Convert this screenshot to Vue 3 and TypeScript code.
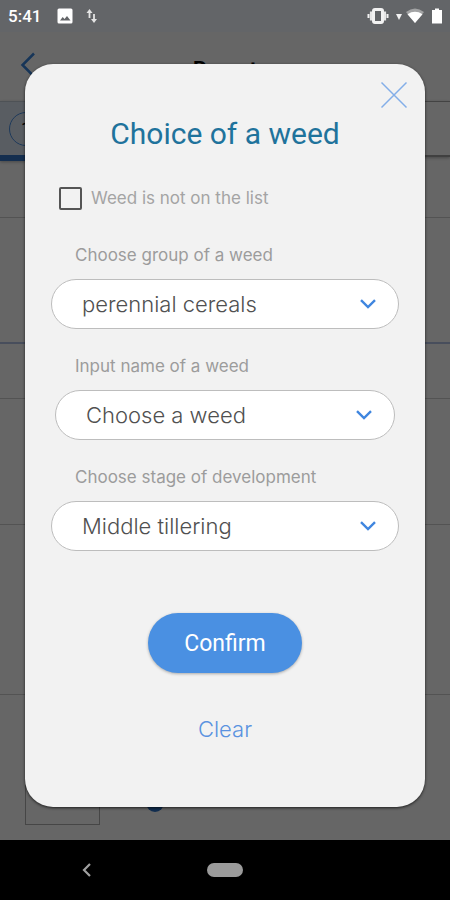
<script setup lang="ts">
import { reactive, ref } from 'vue'

interface Field {
  id: string
  label: string
  value: string
  options: string[]
  inset: boolean
}

const makeFields = (): Field[] => [
  {
    id: 'group',
    label: 'Choose group of a weed',
    value: 'perennial cereals',
    options: ['perennial cereals'],
    inset: false,
  },
  {
    id: 'name',
    label: 'Input name of a weed',
    value: 'Choose a weed',
    options: ['Choose a weed'],
    inset: true,
  },
  {
    id: 'stage',
    label: 'Choose stage of development',
    value: 'Middle tillering',
    options: ['Middle tillering'],
    inset: false,
  },
]

const fields = reactive<Field[]>(makeFields())
const notListed = ref(false)
const open = ref(true)

function clearForm(): void {
  notListed.value = false
  fields.splice(0, fields.length, ...makeFields())
}
</script>

<template>
  <div class="screen">
    <div class="stage">
      <main class="report" :inert="open">
        <header class="topbar">
          <button class="back" type="button" aria-label="Back">
            <svg width="16" height="26" viewBox="0 0 16 26">
              <path d="M14 1.5 2.5 13 14 24.5" fill="none" stroke="currentColor" stroke-width="2.5" />
            </svg>
          </button>
          <h1 class="page-title">Report</h1>
        </header>
        <div class="steps">
          <div class="tab active"><span class="step">1</span></div>
          <div class="tab"></div>
        </div>
        <div class="row row-a"></div>
        <div class="row row-b"></div>
        <div class="row row-c"></div>
        <div class="row row-d"></div>
        <div class="row row-e"></div>
        <div class="row-f">
          <span class="thumb"></span>
          <span class="dot"></span>
        </div>
      </main>

      <div v-if="open" class="overlay">
        <form class="modal" role="dialog" aria-labelledby="dialog-title" @submit.prevent="open = false">
          <button class="close" type="button" aria-label="Close" @click="open = false">
            <svg width="28" height="28" viewBox="0 0 28 28">
              <path d="M1.5 1.5 26.5 26.5M26.5 1.5 1.5 26.5" fill="none" stroke="currentColor" stroke-width="1.5" />
            </svg>
          </button>
          <h2 id="dialog-title" class="title">Choice of a weed</h2>

          <label class="check">
            <input v-model="notListed" type="checkbox" />
            <span>Weed is not on the list</span>
          </label>

          <div class="fields">
            <div v-for="field in fields" :key="field.id" class="field">
              <label :for="field.id">{{ field.label }}</label>
              <div class="select" :class="{ inset: field.inset }">
                <select :id="field.id" v-model="field.value">
                  <option v-for="option in field.options" :key="option">{{ option }}</option>
                </select>
                <svg class="chevron" width="16" height="10" viewBox="0 0 16 10">
                  <path d="M1 1.2 8 8 15 1.2" fill="none" stroke="currentColor" stroke-width="2.4" />
                </svg>
              </div>
            </div>
          </div>

          <button class="confirm" type="submit">Confirm</button>
          <button class="clear" type="button" @click="clearForm">Clear</button>
        </form>
      </div>

      <div class="status">
        <span class="time">5:41</span>
        <svg class="picture" width="16" height="16" viewBox="0 0 16 16">
          <path
            fill="#fff"
            fill-rule="evenodd"
            d="M2 .5h12A1.5 1.5 0 0 1 15.5 2v12a1.5 1.5 0 0 1-1.5 1.5H2A1.5 1.5 0 0 1 .5 14V2A1.5 1.5 0 0 1 2 .5ZM3 12.5h10.5L10 8l-2.500 3-1.800-2Z"
          />
        </svg>
        <svg class="arrows" width="12" height="16" viewBox="0 0 12 16">
          <path d="M3.5 10V3M8 6v7" stroke="#e4e4e4" stroke-width="1.8" />
          <path d="M.5 5 3.500 1l3 4ZM5 11l3 4 3-4Z" fill="#e4e4e4" />
        </svg>
        <svg class="vibrate" width="22" height="16" viewBox="0 0 22 16">
          <rect x="6.500" y="1.500" width="9" height="13" rx="1.500" fill="none" stroke="#f2f2f2" stroke-width="3" />
          <path d="M4 3.500v9M18 3.500v9" stroke="#e6e6e6" stroke-width="2.200" />
          <path d="M1.500 6v4M20.500 6v4" stroke="#f2f2f2" stroke-width="2" />
        </svg>
        <svg class="mini" width="6" height="6" viewBox="0 0 6 6">
          <path d="M0 0h6L3 6Z" fill="#f2f2f2" />
        </svg>
        <svg class="wifi" width="18" height="16" viewBox="0 0 18 16">
          <path d="M0 4Q9-3 18 4L9 15Z" fill="#a2a3a4" />
          <path d="M1.500 6.200Q9 1.500 16.500 6.200L9 15Z" fill="#fff" />
        </svg>
        <svg class="battery" width="12" height="16" viewBox="0 0 12 16">
          <path d="M4 .5h4V2h3v13.500H1V2h3Z" fill="#fff" />
        </svg>
      </div>
    </div>

    <nav class="navbar">
      <button class="nav-back" type="button" aria-label="Back">
        <svg width="10" height="14" viewBox="0 0 10 14">
          <path d="M8 1 2 7l6 6" fill="none" stroke="#a0a0a0" stroke-width="2.2" />
        </svg>
      </button>
      <button class="home" type="button" aria-label="Home"></button>
    </nav>
  </div>
</template>

<style>
body {
  margin: 0;
}
</style>

<style scoped>
.screen {
  display: grid;
  grid-template-rows: 1fr 60px;
  min-height: 100vh;
  font-family: Roboto, 'Liberation Sans', sans-serif;
  background: #000;
}

.screen * {
  box-sizing: border-box;
}

button {
  padding: 0;
  border: 0;
  background: none;
  font: inherit;
  cursor: pointer;
}

svg {
  display: block;
}

.stage {
  display: grid;
}

.report,
.overlay,
.status {
  grid-area: 1 / 1;
}

/* Page behind the dialog */
.report {
  display: flex;
  flex-direction: column;
  background: #fff;
}

.topbar {
  display: grid;
  grid-template-columns: 40px 1fr 40px;
  align-items: center;
  height: 101px;
  padding-top: 32px;
}

.back {
  justify-self: end;
  padding: 0 4px 4px 0;
  color: #3a86dc;
}

.page-title {
  margin: 0;
  padding-top: 4px;
  text-align: center;
  font-size: 21px;
  font-weight: 700;
  line-height: 28px;
}

.steps {
  display: grid;
  grid-template-columns: 1fr 1fr;
  height: 60px;
}

.tab {
  height: 56px;
  padding: 10px 9px;
  border-top: 1px solid #a8a8a8;
  border-bottom: 2px solid #a0a0a0;
  box-shadow: 0 1px 3px rgba(0, 0, 0, 0.3);
}

.tab.active {
  height: 60px;
  border-top-color: #c4ccd8;
  border-bottom: 6px solid #3474c6;
  background: #dfe8f6;
}

.step {
  display: block;
  width: 34px;
  height: 34px;
  border: 1px solid #4a90e2;
  border-radius: 50%;
  text-align: center;
  font-size: 18px;
  line-height: 32px;
}

.row {
  border-bottom: 1px solid #cfcfcf;
}

.row-a {
  height: 57px;
}

.row-b {
  height: 126px;
  border-bottom: 2px solid #b4c4e6;
}

.row-c {
  height: 55px;
}

.row-d {
  height: 126px;
}

.row-e {
  height: 170px;
}

.row-f {
  display: flex;
  align-items: end;
  gap: 46px;
  flex: 1;
  padding: 0 25px 15px;
}

.thumb {
  width: 75px;
  height: 75px;
  border: 1px solid #b0b0b0;
}

.dot {
  width: 18px;
  height: 18px;
  margin-bottom: 13px;
  border-radius: 50%;
  background: #2f74c8;
}

/* Dialog */
.overlay {
  display: flex;
  flex-direction: column;
  padding: 64px 25px 33px;
  background: rgba(0, 0, 0, 0.6);
}

.modal {
  position: relative;
  display: flex;
  flex-direction: column;
  flex: 1;
  padding: 50px 26px 0;
  border-radius: 28px;
  background: #f2f2f2;
  box-shadow: 0 1px 3px rgba(0, 0, 0, 0.7);
}

.close {
  position: absolute;
  top: 17px;
  right: 17px;
  color: #83aee8;
}

.title {
  margin: 0;
  text-align: center;
  font-size: 30px;
  font-weight: 400;
  line-height: 40px;
  color: #1f739c;
}

.check {
  display: flex;
  align-items: center;
  gap: 9px;
  height: 24px;
  margin: 32px 0 33px 8px;
  font-family: Inter, Roboto, sans-serif;
  font-size: 17px;
  font-weight: 400;
  color: #a4a4a4;
}

.check input {
  appearance: none;
  width: 23px;
  height: 23px;
  margin: 0;
  border: 2px solid #555;
  border-radius: 2px;
}

.check input:checked {
  background: #4a90e2;
}

.fields {
  display: flex;
  flex-direction: column;
  gap: 25px;
  margin-bottom: 62px;
}

.field label {
  display: block;
  margin-bottom: 12px;
  padding-left: 24px;
  font-family: Inter, Roboto, sans-serif;
  font-size: 17px;
  font-weight: 400;
  line-height: 24px;
  color: #9c9c9c;
}

.select {
  display: grid;
  align-items: center;
}

.select.inset {
  margin: 0 4px;
}

.select select,
.chevron {
  grid-area: 1 / 1;
}

.select select {
  appearance: none;
  width: 100%;
  height: 50px;
  padding: 0 60px 0 30px;
  border: 1px solid #bdbdbd;
  border-radius: 25px;
  background: #fff;
  font-family: Inter, Roboto, sans-serif;
  font-size: 22px;
  font-weight: 300;
  color: #505050;
}

.chevron {
  justify-self: end;
  margin-right: 23px;
  color: #3f86df;
  pointer-events: none;
}

.confirm {
  align-self: center;
  width: 154px;
  height: 60px;
  border-radius: 30px;
  background: #4a90e2;
  box-shadow: 0 1px 3px rgba(0, 0, 0, 0.3);
  font-size: 23px;
  color: #fff;
}

.clear {
  align-self: center;
  margin-top: 40px;
  font-family: Inter, Roboto, sans-serif;
  font-size: 22px;
  font-weight: 300;
  line-height: 32px;
  color: #5a92e0;
}

/* System bars */
.status {
  display: flex;
  align-items: center;
  align-self: start;
  height: 32px;
  padding: 0 7px 0 8px;
  background: #636568;
  color: #fff;
  z-index: 1;
}

.time {
  font-size: 17px;
  font-weight: 500;
}

.picture {
  margin-left: 16px;
}

.arrows {
  margin-left: 13px;
}

.vibrate {
  margin-left: auto;
}

.mini {
  margin: 2px 4px 0 7px;
}

.battery {
  margin-left: 7px;
}

.navbar {
  display: grid;
  grid-template-columns: 1fr 36px 1fr;
  align-items: center;
}

.nav-back {
  justify-self: end;
  margin-right: 115px;
}

.home {
  width: 36px;
  height: 14px;
  border-radius: 7px;
  background: #9b9b9b;
}
</style>
